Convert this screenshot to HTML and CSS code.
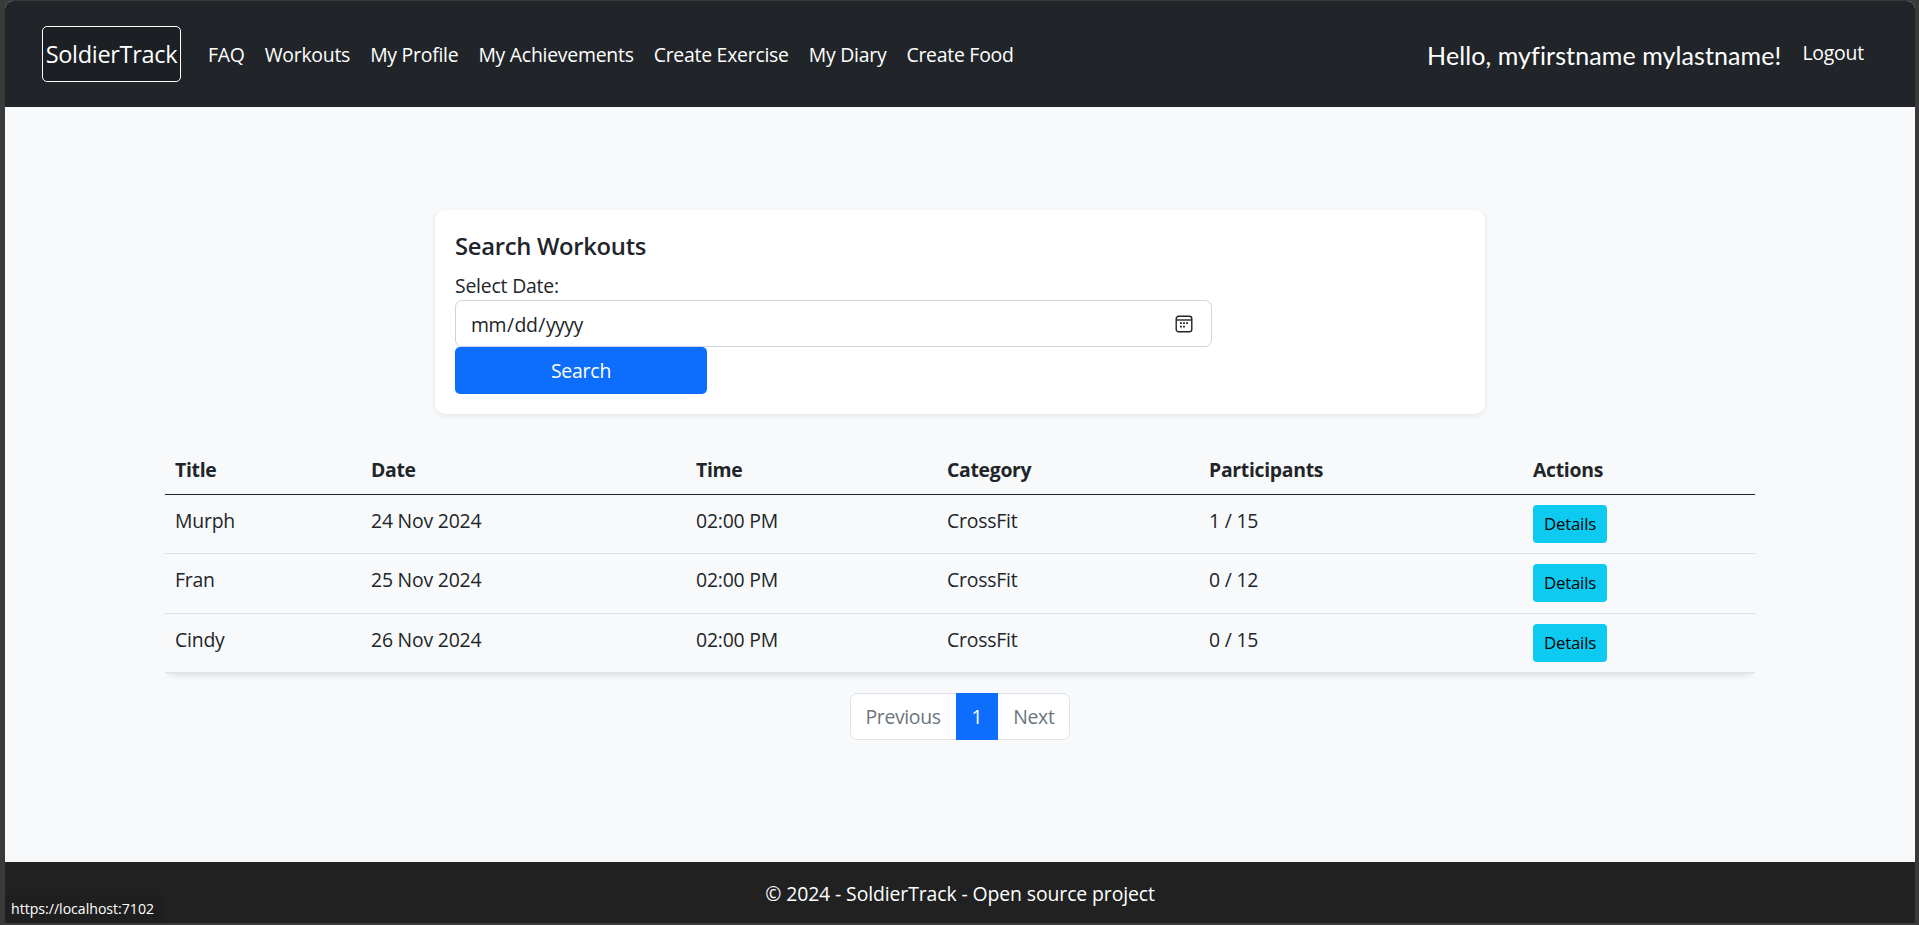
FILE: index.html
```html
<!DOCTYPE html>
<html lang="en">
<head>
  <meta charset="UTF-8">
  <meta name="viewport" content="width=device-width, initial-scale=1.0">
  <title>Workouts - SoldierTrack</title>
  <link rel="stylesheet" href="styles.css">
</head>
<body>
  <div class="page">
    <nav class="navbar">
      <a class="brand" href="#">SoldierTrack</a>
      <ul class="nav-links">
        <li><a href="#">FAQ</a></li>
        <li><a href="#">Workouts</a></li>
        <li><a href="#">My Profile</a></li>
        <li><a href="#">My Achievements</a></li>
        <li><a href="#">Create Exercise</a></li>
        <li><a href="#">My Diary</a></li>
        <li><a href="#">Create Food</a></li>
      </ul>
      <div class="nav-user">
        <span class="greeting">Hello, myfirstname mylastname!</span>
        <a class="logout" href="#">Logout</a>
      </div>
    </nav>

    <main class="content">
      <section class="search-card">
        <h4>Search Workouts</h4>
        <label for="dateInput">Select Date:</label>
        <div class="date-field">
          <input id="dateInput" class="date-input" type="date">
          <svg class="date-icon" width="18" height="18" viewBox="0 0 18 18" fill="none" stroke="#212529" stroke-width="1.4">
            <rect x="1.2" y="1.2" width="15.6" height="15.6" rx="2.6"/>
            <path d="M1.2 5h15.6"/>
            <path d="M5 8.2h1.8M8.1 8.2h1.8M11.2 8.2h1.8M5 11.6h1.8M8.1 11.6h1.8" stroke-width="1.8"/>
          </svg>
        </div>
        <button class="btn-search" type="button">Search</button>
      </section>

      <table class="workouts">
        <colgroup>
          <col class="col-title">
          <col class="col-date">
          <col class="col-time">
          <col class="col-category">
          <col class="col-participants">
          <col class="col-actions">
        </colgroup>
        <thead>
          <tr>
            <th>Title</th>
            <th>Date</th>
            <th>Time</th>
            <th>Category</th>
            <th>Participants</th>
            <th>Actions</th>
          </tr>
        </thead>
        <tbody>
          <tr>
            <td>Murph</td>
            <td>24 Nov 2024</td>
            <td>02:00 PM</td>
            <td>CrossFit</td>
            <td>1 / 15</td>
            <td><a class="btn-details" href="#">Details</a></td>
          </tr>
          <tr>
            <td>Fran</td>
            <td>25 Nov 2024</td>
            <td>02:00 PM</td>
            <td>CrossFit</td>
            <td>0 / 12</td>
            <td><a class="btn-details" href="#">Details</a></td>
          </tr>
          <tr>
            <td>Cindy</td>
            <td>26 Nov 2024</td>
            <td>02:00 PM</td>
            <td>CrossFit</td>
            <td>0 / 15</td>
            <td><a class="btn-details" href="#">Details</a></td>
          </tr>
        </tbody>
      </table>

      <ul class="pagination">
        <li><a href="#">Previous</a></li>
        <li class="active"><a href="#">1</a></li>
        <li><a href="#">Next</a></li>
      </ul>
    </main>

    <footer class="footer">© 2024 - SoldierTrack - Open source project</footer>
  </div>
  <div class="status-bubble">https://localhost:7102</div>
</body>
</html>
```

FILE: styles.css
```css
* { box-sizing: border-box; }
html, body { height: 100%; margin: 0; }
body { background: #3a3a3a; padding: 1px 4px 2px 5px; font-family: "Open Sans", "Noto Sans", sans-serif; font-size: 19.4px; letter-spacing: -0.2px; line-height: 30px; color: #212529; overflow: hidden; }
a { text-decoration: none; }
ul { list-style: none; margin: 0; padding: 0; }

.page { height: 100%; display: flex; flex-direction: column; background: #f8f9fa; border-radius: 8px 8px 0 0; overflow: hidden; }

.navbar { height: 106px; flex: none; display: flex; align-items: center; padding: 0 51px 0 37px; background: #212529; color: #fff; }
.brand { width: 139px; height: 56px; display: flex; align-items: center; justify-content: center; border: 1px solid #fff; border-radius: 5px; background: #1c1f23; color: #fff; font-size: 23.5px; letter-spacing: -0.3px; }
.nav-links { display: flex; margin-left: 17px; }
.nav-links a { display: block; padding: 2px 10px 0; color: #fff; letter-spacing: -0.24px; }
.nav-user { margin-left: auto; display: flex; align-items: center; gap: 21px; }
.greeting { font-family: "Comic Sans MS", Lato, sans-serif; font-size: 25px; letter-spacing: 0.1px; position: relative; top: 1px; }
.logout { color: #fff; position: relative; top: -1px; }

.content { flex: 1; display: flex; flex-direction: column; align-items: center; padding-top: 103px; }

.search-card { width: 1050px; height: 204px; padding: 22px 20px 0; background: #fff; border-radius: 10px; box-shadow: 0 2px 6px rgba(0, 0, 0, .08); }
.search-card h4 { margin: 0 0 9px; font-size: 23.8px; font-weight: 600; line-height: 29px; letter-spacing: -0.3px; }
.search-card label { display: block; height: 30px; line-height: 32px; }
.date-field { position: relative; width: 757px; }
.date-input { display: block; width: 100%; height: 47px; padding: 2px 15px 0 14px; border: 1px solid #ced4da; border-radius: 7px; background: #fff; color: #212529; font: inherit; letter-spacing: -0.5px; }
.date-input::-webkit-calendar-picker-indicator { opacity: 0; }
.date-icon { position: absolute; right: 19px; top: 15px; pointer-events: none; }
.btn-search { display: block; width: 252px; height: 47px; padding-top: 2px; border: 0; border-radius: 5px; background: #0d6efd; color: #fff; font: inherit; letter-spacing: inherit; }

.workouts { width: 1590px; margin-top: 30px; border-collapse: collapse; table-layout: fixed; box-shadow: 0 6px 6px -4px rgba(0, 0, 0, .12); }
.col-title { width: 196px; }
.col-date { width: 325px; }
.col-time { width: 251px; }
.col-category { width: 262px; }
.col-participants { width: 324px; }
.col-actions { width: 232px; }
.workouts th { height: 50px; padding: 11px 10px 9px; text-align: left; font-weight: 700; letter-spacing: -0.3px; border-bottom: 1px solid #212529; }
.workouts td { height: 60px; padding: 10px; vertical-align: top; line-height: 32px; border-bottom: 1px solid #dee2e6; }
.workouts tbody tr:first-child td { height: 59px; }
.workouts tbody tr:last-child td { height: 59px; }
.btn-details { display: block; width: 74px; height: 38px; border-radius: 4px; background: #0dcaf0; color: #000; font-size: 16.8px; line-height: 38px; text-align: center; }

.pagination { display: flex; height: 47px; margin-top: 20px; border-radius: 7px; background: #fff; }
.pagination a { display: block; height: 47px; padding: 0 15px; line-height: 45px; letter-spacing: -0.35px; border: 1px solid #dee2e6; color: #6c757d; }
.pagination li + li a { margin-left: -1px; }
.pagination li:first-child a { border-radius: 7px 0 0 7px; }
.pagination li:last-child a { border-radius: 0 7px 7px 0; }
.pagination .active a { background: #0d6efd; border-color: #0d6efd; color: #fff; position: relative; }

.footer { height: 61px; flex: none; padding-top: 17px; background: #212121; color: #fff; text-align: center; letter-spacing: -0.1px; }

/* browser link preview, sits over the footer */
.status-bubble { position: absolute; left: 5px; bottom: 2px; width: 158px; height: 28px; padding-left: 6px; border-radius: 0 6px 0 6px; background: #1f1f1f; color: #fff; font-size: 14.1px; letter-spacing: 0; line-height: 28px; }
```
